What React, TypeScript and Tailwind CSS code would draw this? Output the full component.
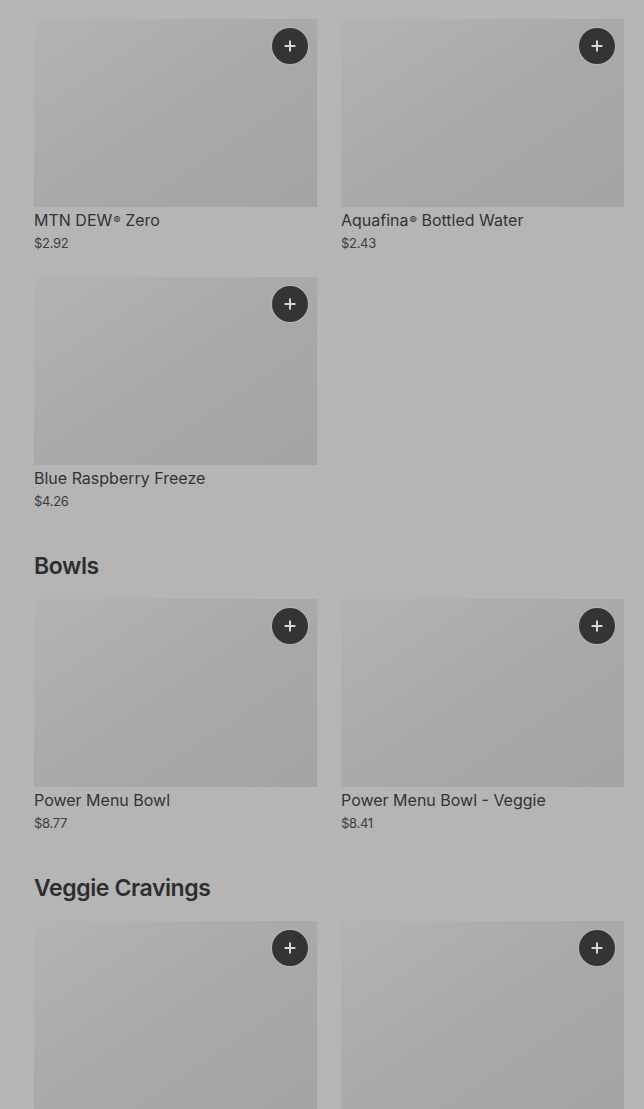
import { Plus } from 'lucide-react';

type Item = { name?: string; reg?: boolean; rest?: string; price?: string };

const sections: { title?: string; items: Item[] }[] = [
  {
    items: [
      { name: 'MTN DEW', reg: true, rest: ' Zero', price: '$2.92' },
      { name: 'Aquafina', reg: true, rest: ' Bottled Water', price: '$2.43' },
      { name: 'Blue Raspberry Freeze', price: '$4.26' },
    ],
  },
  {
    title: 'Bowls',
    items: [
      { name: 'Power Menu Bowl', price: '$8.77' },
      { name: 'Power Menu Bowl - Veggie', price: '$8.41' },
    ],
  },
  {
    title: 'Veggie Cravings',
    // the viewport ends at the bottom of these photos
    items: [{}, {}],
  },
];

const Card = ({ item }: { item: Item }) => (
  <div className="flex flex-col">
    <div className="relative h-[188px] bg-gradient-to-br from-[#b3b3b3] via-[#a9a9a9] to-[#a4a4a4]">
      <button className="absolute top-[9px] right-[9px] flex h-9 w-9 items-center justify-center rounded-full bg-[#343434] text-[#d6d6d6] ring-1 ring-[#bdbdbd]/60">
        <Plus className="h-4 w-4" strokeWidth={3} />
      </button>
    </div>
    {item.name && (
      <>
        <div className="mt-[2px] text-[16px] leading-[22px] text-[#333333]">
          {item.name}
          {item.reg && <sup className="relative top-[-2px] ml-[1px] text-[11px]">®</sup>}
          {item.rest}
        </div>
        <div className="mt-[2px] text-[13px] leading-[20px] tracking-[-0.3px] text-[#3d3d3d]">
          {item.price}
        </div>
      </>
    )}
  </div>
);

export default function App() {
  return (
    <div
      className="h-[1109px] overflow-hidden bg-[#b5b5b5] pl-[34px] pr-[20px] pt-[19px]"
      style={{ fontFamily: 'Inter, "Liberation Sans", sans-serif' }}
    >
      {sections.map((s, i) => (
        <section key={i} className={s.title ? 'mt-[39px]' : ''}>
          {s.title && (
            <h2 className="mb-[17px] h-8 text-[23px] font-semibold leading-8 tracking-[-0.4px] text-[#2e2e2e]">
              {s.title}
            </h2>
          )}
          <div className="grid grid-cols-2 gap-x-6 gap-y-6">
            {s.items.map((it, j) => (
              <Card key={j} item={it} />
            ))}
          </div>
        </section>
      ))}
    </div>
  );
}
